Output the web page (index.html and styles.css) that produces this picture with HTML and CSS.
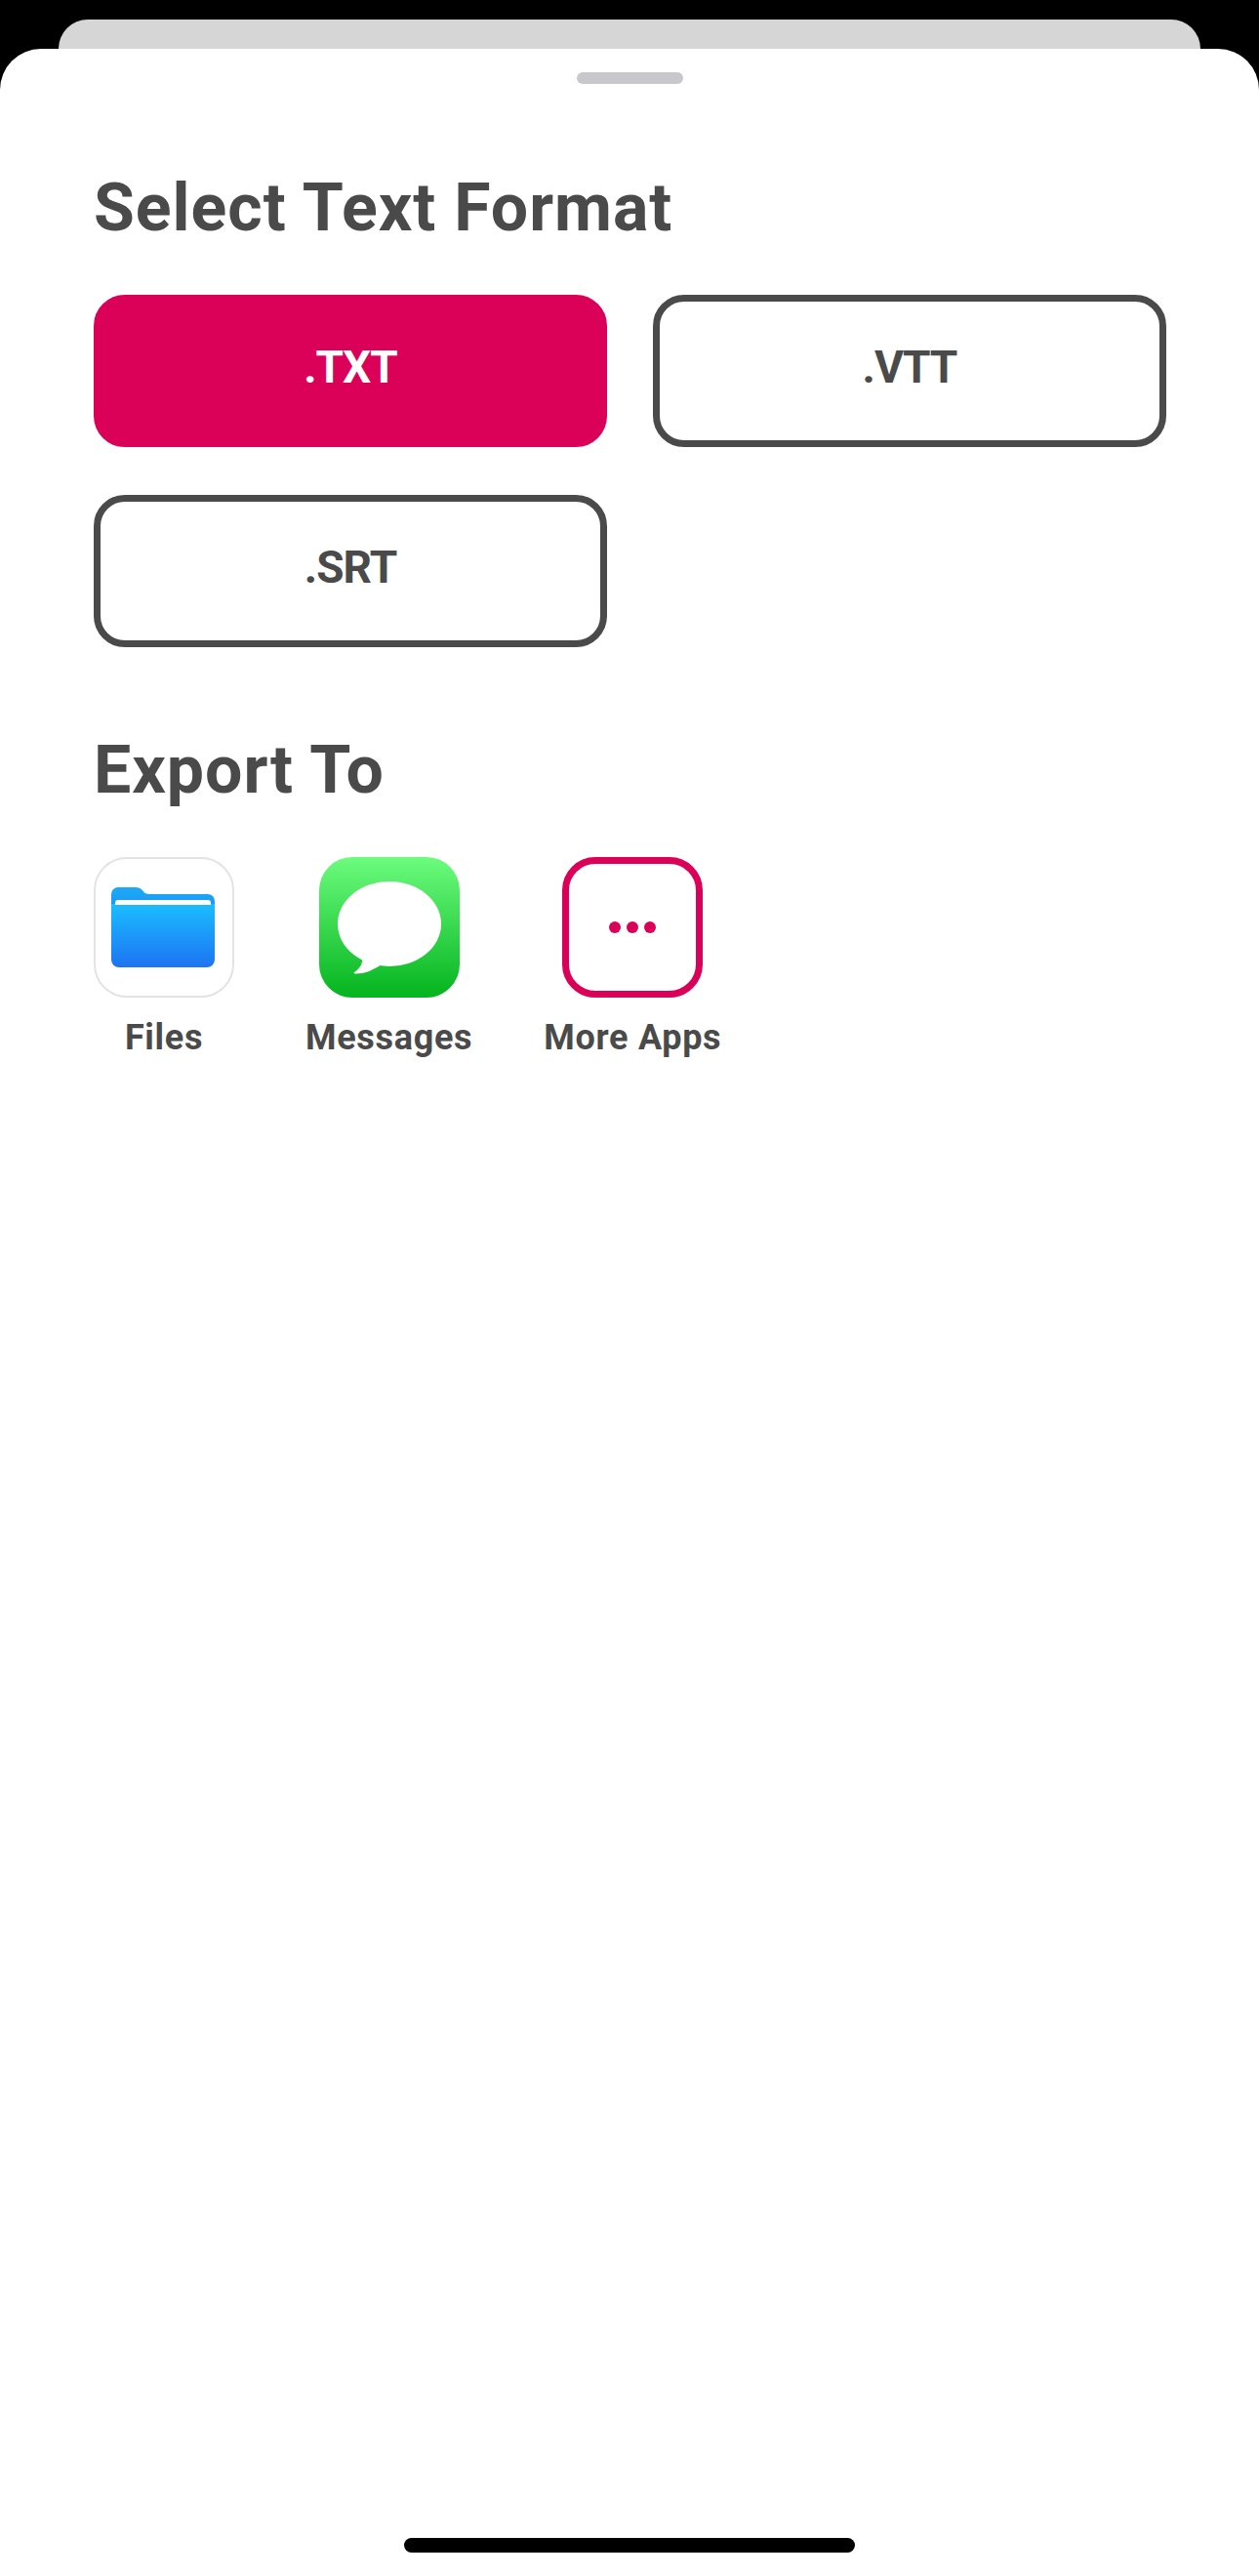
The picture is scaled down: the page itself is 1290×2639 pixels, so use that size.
FILE: index.html
```html
<!DOCTYPE html>
<html lang="en">
<head>
<meta charset="utf-8">
<title>Select Text Format</title>
<link rel="stylesheet" href="styles.css">
</head>
<body>
<div class="screen">
  <div class="back-card"></div>
  <main class="sheet">
    <div class="handle"></div>
    <h2 class="title title-format">Select Text Format</h2>
    <div class="formats">
      <button class="format format-active">.TXT</button>
      <button class="format">.VTT</button>
      <button class="format">.SRT</button>
    </div>
    <h2 class="title title-export">Export To</h2>
    <div class="apps">
      <div class="app">
        <div class="icon icon-files">
          <svg viewBox="0 0 143 144" width="143" height="144">
            <defs>
              <linearGradient id="folderBack" x1="0" y1="0" x2="0" y2="1"><stop offset="0" stop-color="#1ca9f7"/><stop offset="1" stop-color="#1a8ef0"/></linearGradient>
              <linearGradient id="folderFront" x1="0" y1="0" x2="0" y2="1"><stop offset="0" stop-color="#1bbdff"/><stop offset="1" stop-color="#1c74f2"/></linearGradient>
            </defs>
            <path fill="url(#folderBack)" d="M18 38a7 7 0 0 1 7-7h18c3 0 5 1 7 3c2 3 4 4 7 4h60a7 7 0 0 1 7 7v20H18z"/>
            <path fill="url(#folderFront)" d="M18 48h106v57a8 8 0 0 1-8 8H26a8 8 0 0 1-8-8z"/>
            <path fill="#fff" d="M22 49v-2a3 3 0 0 1 3-3h92a3 3 0 0 1 3 3v2z"/>
          </svg>
        </div>
        <span class="app-label">Files</span>
      </div>
      <div class="app">
        <div class="icon icon-messages">
          <svg viewBox="0 0 144 144" width="144" height="144">
            <ellipse cx="72" cy="68.5" rx="53" ry="43.5" fill="#fff"/>
            <path fill="#fff" d="M44 103c1 6-2 11-8 15c-1 1 0 1.500 2 1.500c9 0 15-3 24-8z"/>
          </svg>
        </div>
        <span class="app-label">Messages</span>
      </div>
      <div class="app">
        <div class="icon icon-more">
          <span class="dot"></span><span class="dot"></span><span class="dot"></span>
        </div>
        <span class="app-label">More Apps</span>
      </div>
    </div>
    <div class="home-bar"></div>
  </main>
</div>
</body>
</html>
```
FILE: styles.css
```css
* { box-sizing: border-box; }
html, body { margin: 0; padding: 0; }
body {
  background: #000;
  font-family: Roboto, "Liberation Sans", sans-serif;
  color: #4a4a4a;
}
.screen {
  height: 2639px;
  padding-top: 20px;
  display: flex;
  flex-direction: column;
  overflow: hidden;
}
.back-card {
  height: 30px;
  margin: 0 60px;
  flex: none;
  background: #d6d6d6;
  border-radius: 30px 30px 0 0;
}
.sheet {
  flex: 1;
  display: flex;
  flex-direction: column;
  background: #fff;
  border-radius: 42px 42px 0 0;
  padding: 24px 95px 24px 96px;
}
.handle {
  width: 109px;
  height: 12px;
  flex: none;
  align-self: center;
  border-radius: 6px;
  background: #c7c7cc;
}
.title {
  margin: 0;
  font-size: 68px;
  font-weight: 700;
  line-height: 80px;
  letter-spacing: 1px;
}
.title-format { margin-top: 87px; }
.title-export { margin-top: 86px; }
.formats {
  display: grid;
  grid-template-columns: 526px 526px;
  column-gap: 47px;
  row-gap: 49px;
  margin-top: 49px;
}
.format {
  height: 156px;
  padding: 0 0 8px;
  border: 7px solid #4a4a4a;
  border-radius: 32px;
  background: #fff;
  color: #4a4a4a;
  font-family: inherit;
  font-size: 46px;
  font-weight: 700;
  letter-spacing: -1px;
}
.format-active {
  background: #db0058;
  border-color: #db0058;
  color: #fff;
}
.apps {
  display: flex;
  gap: 73px;
  margin-top: 49px;
}
.app {
  display: flex;
  flex-direction: column;
  align-items: center;
  gap: 20px;
}
.icon {
  width: 144px;
  height: 144px;
  flex: none;
  border-radius: 34px;
}
.icon svg { display: block; }
.icon-files {
  border: 2px solid #e3e3e3;
  background: #fff;
}
.icon-files svg { margin: -2px; }
.icon-messages { background: linear-gradient(#6cfc7e, #04b41e); }
.icon-more {
  display: flex;
  align-items: center;
  justify-content: center;
  gap: 6px;
  border: 7px solid #db0058;
}
.dot {
  width: 12px;
  height: 12px;
  border-radius: 50%;
  background: #db0058;
}
.app-label {
  font-size: 36px;
  line-height: 42px;
  font-weight: 700;
  letter-spacing: 0.7px;
  white-space: nowrap;
}
.home-bar {
  width: 462px;
  height: 15px;
  flex: none;
  align-self: center;
  margin: auto 1px 0 0;
  border-radius: 8px;
  background: #000;
}
```
